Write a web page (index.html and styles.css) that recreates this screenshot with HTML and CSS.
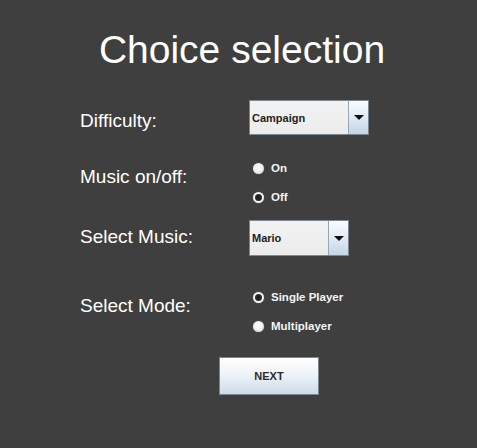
FILE: index.html
```html
<!DOCTYPE html>
<html>
<head>
<meta charset="utf-8">
<link rel="stylesheet" href="styles.css">
</head>
<body>
<div class="page">
  <h1 class="title">Choice selection</h1>

  <div class="row row-difficulty">
    <div class="label">Difficulty:</div>
    <div class="combo combo-wide">
      <span class="combo-value">Campaign</span>
      <span class="combo-arrow"><span class="tri"></span></span>
    </div>
  </div>

  <div class="row row-music">
    <div class="label">Music on/off:</div>
    <div class="radios">
      <div class="radio"><span class="dot"></span><span class="radio-text">On</span></div>
      <div class="radio"><span class="dot checked"></span><span class="radio-text">Off</span></div>
    </div>
  </div>

  <div class="row row-select-music">
    <div class="label">Select Music:</div>
    <div class="combo combo-narrow">
      <span class="combo-value">Mario</span>
      <span class="combo-arrow"><span class="tri"></span></span>
    </div>
  </div>

  <div class="row row-mode">
    <div class="label">Select Mode:</div>
    <div class="radios">
      <div class="radio"><span class="dot checked"></span><span class="radio-text">Single Player</span></div>
      <div class="radio"><span class="dot"></span><span class="radio-text">Multiplayer</span></div>
    </div>
  </div>

  <div class="actions">
    <button class="next">NEXT</button>
  </div>
</div>
</body>
</html>
```

FILE: styles.css
```css
html, body {
  margin: 0;
  padding: 0;
  background: #3f3f3f;
  width: 100%;
  height: 100%;
}

.page {
  box-sizing: border-box;
  height: 448px;
  padding: 27px 0 0 80px;
  font-family: "Liberation Sans", Arial, sans-serif;
  color: #ffffff;
}

.title {
  margin: 0 0 0 -80px;
  padding-left: 7px;
  font-size: 39px;
  line-height: 46px;
  font-weight: normal;
  text-align: center;
  color: #ffffff;
}

.row {
  display: flex;
  align-items: flex-start;
}

.label {
  width: 169px;
  font-size: 19px;
  line-height: 22px;
  color: #ffffff;
}

.row-difficulty { margin-top: 27px; }
.row-difficulty .label { margin-top: 10px; }

.row-music { margin-top: 23px; }
.row-music .label { margin-top: 8px; }

.row-select-music { margin-top: 13px; }
.row-select-music .label { margin-top: 6px; }

.row-mode { margin-top: 31px; }
.row-mode .label { margin-top: 8px; }

.combo {
  box-sizing: border-box;
  display: flex;
  border: 1px solid #7d8791;
  background: #eeeeee;
}

.combo-wide { width: 120px; height: 35px; }
.combo-narrow { width: 100px; height: 36px; }

.combo-value {
  flex: 1;
  display: flex;
  align-items: center;
  padding-left: 2px;
  font-size: 11px;
  font-weight: bold;
  color: #1e1e1e;
  background: linear-gradient(#f2f2f2, #ececec);
}

.combo-arrow {
  width: 19px;
  border-left: 1px solid #9aa6b2;
  display: flex;
  align-items: center;
  justify-content: center;
  background: linear-gradient(#fbfdff, #dde8f3 55%, #c4d5e6);
}

.tri {
  width: 0;
  height: 0;
  border-left: 5px solid transparent;
  border-right: 5px solid transparent;
  border-top: 5px solid #111111;
}

.radios {
  display: flex;
  flex-direction: column;
  gap: 9px;
}

.radio {
  display: flex;
  align-items: center;
  height: 20px;
  padding-left: 4px;
}

.dot {
  box-sizing: border-box;
  width: 11px;
  height: 11px;
  border-radius: 50%;
  background: radial-gradient(circle at 45% 40%, #ffffff 0%, #f2f2f2 45%, #c9c9c9 100%);
  box-shadow: 0 0 1px 0 rgba(200,200,200,0.6);
}

.dot.checked {
  border: 2px solid #f4f4f4;
  background: radial-gradient(circle, #1a1a1a 0%, #2a2a2a 60%, #555555 100%);
}

.radio-text {
  margin-left: 7px;
  font-size: 11.5px;
  font-weight: bold;
  color: #f4f4f4;
}

.actions {
  margin-top: 21px;
  padding-left: 139px;
}

.next {
  box-sizing: border-box;
  width: 100px;
  height: 38px;
  border: 1px solid #7d8791;
  border-radius: 0;
  background: linear-gradient(#ffffff, #eef3f8 45%, #cddcea);
  font-family: "Liberation Sans", Arial, sans-serif;
  font-size: 11px;
  font-weight: bold;
  color: #2b2b2b;
  padding: 0;
}
```
